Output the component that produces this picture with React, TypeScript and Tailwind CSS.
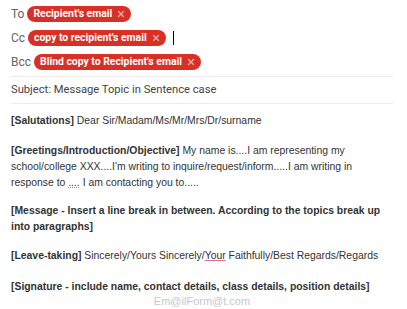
import { X } from 'lucide-react';

function Chip({ label }: { label: string }) {
  return (
    <span className="inline-flex items-center h-[16px] pl-[6px] pr-[5px] rounded-full bg-[#d93025] text-white text-[10.4px] font-bold leading-none">
      {label}
      <X className="ml-[4px] w-[10px] h-[10px] text-[#f3b4ae]" strokeWidth={3} />
    </span>
  );
}

export default function App() {
  return (
    <div className="w-[407px] h-[309px] bg-white overflow-hidden font-['Roboto',sans-serif]">
      <div className="pl-[11px] pr-[14px]">
        <div className="flex flex-col gap-[8px] pt-[6px] pb-[6px] border-b border-[#ececec] text-[12px] leading-[16px] text-[#666]">
          <div className="flex items-center gap-[3px]">
            <span>To</span>
            <Chip label="Recipient's email" />
          </div>
          <div className="flex items-center gap-[3px]">
            <span>Cc</span>
            <Chip label="copy to recipient's email" />
            <span className="ml-[4px] w-px h-[14px] bg-black" />
          </div>
          <div className="flex items-center gap-[3px]">
            <span>Bcc</span>
            <Chip label="Blind copy to Recipient's email" />
          </div>
        </div>
        <div className="h-[27px] flex items-center border-b border-[#ececec] text-[11.2px] text-[#444]">
          Subject: Message Topic in Sentence case
        </div>
        <div className="pt-[9px] text-[10.4px] leading-[16px] text-[#333] font-['Liberation_Sans',Arial,sans-serif]">
          <p>
            <b>[Salutations]</b> Dear Sir/Madam/Ms/Mr/Mrs/Dr/surname
          </p>
          <p className="mt-[14px]">
            <b>[Greetings/Introduction/Objective]</b> My name is....I am representing my school/college XXX....I'm writing to inquire/request/inform.....I am writing in response to <span className="underline decoration-dotted decoration-[#e07090]">....</span> I am contacting you to.....
          </p>
          <p className="mt-[12px] font-bold">
            [Message - Insert a line break in between. According to the topics break up into paragraphs]
          </p>
          <p className="mt-[13px]">
            <b>[Leave-taking]</b> Sincerely/Yours Sincerely/<span className="underline decoration-[#e07090]">Your</span> Faithfully/Best Regards/Regards
          </p>
          <p className="mt-[15px] font-bold">
            [Signature - include name, contact details, class details, position details]
          </p>
          <p className="text-center text-[#c8c8c8] text-[11px] leading-[12px]">Em@ilForm@t.com</p>
        </div>
      </div>
    </div>
  );
}
